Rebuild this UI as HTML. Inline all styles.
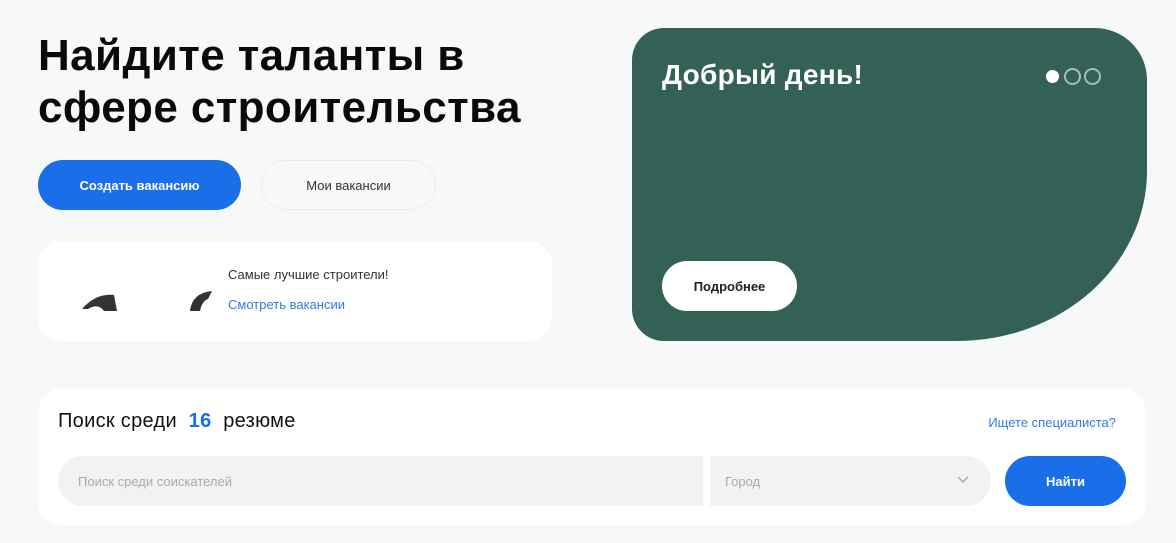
<!DOCTYPE html>
<html><head><meta charset="utf-8"><style>
*{box-sizing:border-box;margin:0;padding:0}
body{width:1176px;height:543px;background:#f7f8fa;font-family:"Liberation Sans","Noto Sans CJK SC",sans-serif;position:relative;overflow:hidden;color:#111}
.abs{position:absolute}
h1{position:absolute;left:38px;top:30px;font-size:44px;line-height:52px;font-weight:bold;color:#0a0a0a;letter-spacing:0.4px}
.btn{position:absolute;border-radius:25px;display:flex;align-items:center;justify-content:center;font-size:13px;font-weight:bold}
.card{position:absolute;background:#fff;border-radius:24px}
</style></head><body>
<h1>Найдите таланты в<br>сфере строительства</h1>
<div class="btn" style="left:38px;top:160px;width:203px;height:50px;background:#1a6fe8;color:#fff">Создать вакансию</div>
<div class="btn" style="left:261px;top:160px;width:175px;height:50px;border:1px solid #ececec;color:#333;font-weight:normal">Мои вакансии</div>
<div class="card" style="left:38px;top:241px;width:514px;height:100px">
 <svg class="abs" style="left:44px;top:50px" width="40" height="20"><path d="M0 18 Q14 2 32 4 L35 20 L22 20 Q16 12 6 18Z" fill="#333"/></svg>
 <svg class="abs" style="left:150px;top:48px" width="30" height="22"><path d="M2 22 Q4 4 24 2 L20 10 Q14 12 12 22Z" fill="#333"/></svg>
 <div class="abs" style="left:190px;top:26px;font-size:13px;color:#333">Самые лучшие строители!</div>
 <div class="abs" style="left:190px;top:56px;font-size:13px;color:#2d7be8">Смотреть вакансии</div>
</div>
<div class="abs" style="left:632px;top:28px;width:515px;height:313px;background:#336155;border-radius:32px 52px 190px 32px / 32px 52px 170px 32px"></div>
<div class="abs" style="left:662px;top:59px;font-size:28px;font-weight:bold;color:#fff;letter-spacing:0.3px">Добрый день!</div>
<div class="abs" style="left:1046px;top:70px;width:13px;height:13px;border-radius:50%;background:#fff"></div>
<div class="abs" style="left:1064px;top:68px;width:17px;height:17px;border-radius:50%;border:2px solid #a8bdb6"></div>
<div class="abs" style="left:1084px;top:68px;width:17px;height:17px;border-radius:50%;border:2px solid #a8bdb6"></div>
<div class="btn" style="left:662px;top:261px;width:135px;height:50px;background:#fff;color:#222">Подробнее</div>
<div class="card" style="left:38px;top:388px;width:1108px;height:137px">
 <div class="abs" style="left:20px;top:22px;font-size:20px;color:#111;letter-spacing:0.3px">Поиск среди <span style="color:#1a6fe8;font-weight:bold">&nbsp;16&nbsp;</span> резюме</div>
 <div class="abs" style="right:30px;top:27px;font-size:13px;color:#2d7be8">Ищете специалиста?</div>
 <div class="abs" style="left:20px;top:68px;width:645px;height:50px;background:#f2f2f2;border-radius:25px 0 0 25px;padding:18px 20px;font-size:13px;color:#aaa">Поиск среди соискателей</div>
 <div class="abs" style="left:672px;top:68px;width:281px;height:50px;background:#f2f2f2;border-radius:0 25px 25px 0;padding:18px 15px;font-size:13px;color:#aaa">Город
  <svg class="abs" style="right:22px;top:20px" width="12" height="8"><path d="M1 1L6 6L11 1" stroke="#aaa" stroke-width="1.5" fill="none"/></svg></div>
 <div class="btn" style="left:967px;top:68px;width:121px;height:50px;background:#1a6fe8;color:#fff">Найти</div>
</div>
</body></html>
